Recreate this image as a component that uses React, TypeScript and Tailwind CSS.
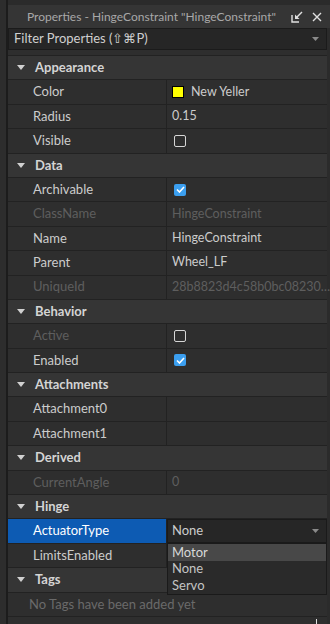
import React from 'react';

type Row =
  | { kind: 'header'; label: string }
  | { kind: 'prop'; label: string; value?: string; disabled?: boolean; check?: boolean; swatch?: string; selected?: boolean; dropdown?: boolean }
  | { kind: 'note'; label: string };

const rows: Row[] = [
  { kind: 'header', label: 'Appearance' },
  { kind: 'prop', label: 'Color', value: 'New Yeller', swatch: '#ffff00' },
  { kind: 'prop', label: 'Radius', value: '0.15' },
  { kind: 'prop', label: 'Visible', check: false },
  { kind: 'header', label: 'Data' },
  { kind: 'prop', label: 'Archivable', check: true },
  { kind: 'prop', label: 'ClassName', value: 'HingeConstraint', disabled: true },
  { kind: 'prop', label: 'Name', value: 'HingeConstraint' },
  { kind: 'prop', label: 'Parent', value: 'Wheel_LF' },
  { kind: 'prop', label: 'UniqueId', value: '28b8823d4c58b0bc08230…', disabled: true },
  { kind: 'header', label: 'Behavior' },
  { kind: 'prop', label: 'Active', check: false, disabled: true },
  { kind: 'prop', label: 'Enabled', check: true },
  { kind: 'header', label: 'Attachments' },
  { kind: 'prop', label: 'Attachment0' },
  { kind: 'prop', label: 'Attachment1' },
  { kind: 'header', label: 'Derived' },
  { kind: 'prop', label: 'CurrentAngle', value: '0', disabled: true },
  { kind: 'header', label: 'Hinge' },
  { kind: 'prop', label: 'ActuatorType', value: 'None', selected: true, dropdown: true },
  { kind: 'prop', label: 'LimitsEnabled' },
  { kind: 'header', label: 'Tags' },
  { kind: 'note', label: 'No Tags have been added yet' },
];

const Caret = () => (
  <svg width="8" height="5" viewBox="0 0 8 5" className="shrink-0">
    <path d="M0 0 L8 0 L4 5 Z" fill="#d0d0d0" />
  </svg>
);

const Checkbox = ({ on }: { on: boolean }) =>
  on ? (
    <div className="w-[12px] h-[12px] rounded-[2px] bg-[#3b9ff0] flex items-center justify-center">
      <svg width="9" height="7" viewBox="0 0 9 7">
        <path d="M1 3.5 L3.5 6 L8 1" stroke="#fff" strokeWidth="1.6" fill="none" />
      </svg>
    </div>
  ) : (
    <div className="w-[12px] h-[12px] rounded-[2px] border border-[#d6d6d6]" />
  );

export default function App() {
  return (
    <div className="w-[330px] h-[624px] flex bg-[#2b2b2b] overflow-hidden text-[#cccccc]" style={{ fontFamily: 'Lato, "Noto Sans", sans-serif' }}>
      {/* dock gutter */}
      <div className="w-[6px] bg-[#2d2d2d]" />
      <div className="w-[2px] bg-[#1c1c1c]" />

      <div className="flex-1 flex flex-col min-w-0">
        <div className="h-[5px] bg-[#2b2b2b]" />
        {/* title */}
        <div className="h-[23px] bg-[#353535] flex items-center pl-[19px] pr-[8px] text-[12px] text-[#a8a8a8]">
          <span className="flex-1 whitespace-nowrap">Properties - HingeConstraint "HingeConstraint"</span>
          <svg width="12" height="12" viewBox="0 0 12 12" className="mr-[9px] shrink-0">
            <path d="M1 4 V11 H8" stroke="#e0e0e0" strokeWidth="1.4" fill="none" />
            <path d="M11 1 L5 7" stroke="#e0e0e0" strokeWidth="1.4" />
            <path d="M4 3.5 V8 H8.5 Z" fill="#e0e0e0" />
          </svg>
          <svg width="10" height="10" viewBox="0 0 10 10" className="shrink-0">
            <path d="M1 1 L9 9 M9 1 L1 9" stroke="#e0e0e0" strokeWidth="1.4" />
          </svg>
        </div>
        {/* filter */}
        <div className="h-[22px] mr-[3px] bg-[#262626] border border-[#1b1b1b] flex items-center pl-[5px] pr-[7px] text-[13px] text-[#cfcfcf]">
          <span className="flex-1">Filter Properties (⇧⌘P)</span>
          <svg width="7" height="4" viewBox="0 0 7 4">
            <path d="M0 0 L7 0 L3.5 4 Z" fill="#8a8a8a" />
          </svg>
        </div>
        <div className="h-[5px] bg-[#2e2e2e] mr-[3px]" />

        {/* property grid */}
        <div className="flex-1 mr-[3px] bg-[#2e2e2e] border-t border-[#222222] text-[13px]">
          {rows.map((r, i) => {
            if (r.kind === 'header') {
              return (
                <div key={i} className="h-[24.4px] bg-[#353535] border-b border-[#222222] flex items-center pl-[9px] font-bold text-[#d4d4d4]">
                  <Caret />
                  <span className="ml-[10px]">{r.label}</span>
                </div>
              );
            }
            if (r.kind === 'note') {
              return (
                <div key={i} className="h-[24.4px] border-b border-[#222222] flex items-center pl-[21px] text-[#6a6a6a]">
                  {r.label}
                </div>
              );
            }
            const tone = r.disabled ? 'text-[#5e5e5e]' : 'text-[#cccccc]';
            return (
              <div key={i} className="h-[24.4px] border-b border-[#222222] flex">
                <div className={`w-[159px] shrink-0 border-r border-[#222222] flex items-center pl-[25px] ${r.selected ? 'bg-[#0d5bb3] text-white' : tone}`}>
                  {r.label}
                </div>
                <div className="flex-1 min-w-0 relative flex items-center">
                  {r.dropdown ? (
                    <>
                      <div className="absolute inset-0 bg-[#262626] border border-[#1a1a1a] flex items-center pl-[4px] pr-[7px]">
                        <span className="flex-1">{r.value}</span>
                        <svg width="7" height="4" viewBox="0 0 7 4">
                          <path d="M0 0 L7 0 L3.5 4 Z" fill="#8a8a8a" />
                        </svg>
                      </div>
                      <div className="absolute left-0 right-0 top-full z-10 bg-[#2a2a2a] border border-[#1a1a1a] flex flex-col text-[13px]">
                        <div className="h-[17px] bg-[#484848] flex items-center pl-[4px] text-[#d8d8d8]">Motor</div>
                        <div className="h-[16.5px] flex items-center pl-[4px] text-[#c4c4c4]">None</div>
                        <div className="h-[16.5px] flex items-center pl-[4px] text-[#c4c4c4]">Servo</div>
                      </div>
                    </>
                  ) : (
                    <div className={`flex items-center pl-[5px] min-w-0 ${tone}`}>
                      {r.swatch && <div className="w-[12px] h-[12px] border border-black mr-[7px] shrink-0" style={{ background: r.swatch }} />}
                      {r.check !== undefined && <div className="pl-[2px]"><Checkbox on={r.check} /></div>}
                      {r.value && <span className="whitespace-nowrap text-[12.5px]">{r.value}</span>}
                    </div>
                  )}
                </div>
              </div>
            );
          })}
          <div className="flex justify-end pr-[10px] pt-[2px]">
            <div className="w-[1px] h-[5px] bg-[#e0e0e0]" />
          </div>
        </div>
      </div>
    </div>
  );
}
